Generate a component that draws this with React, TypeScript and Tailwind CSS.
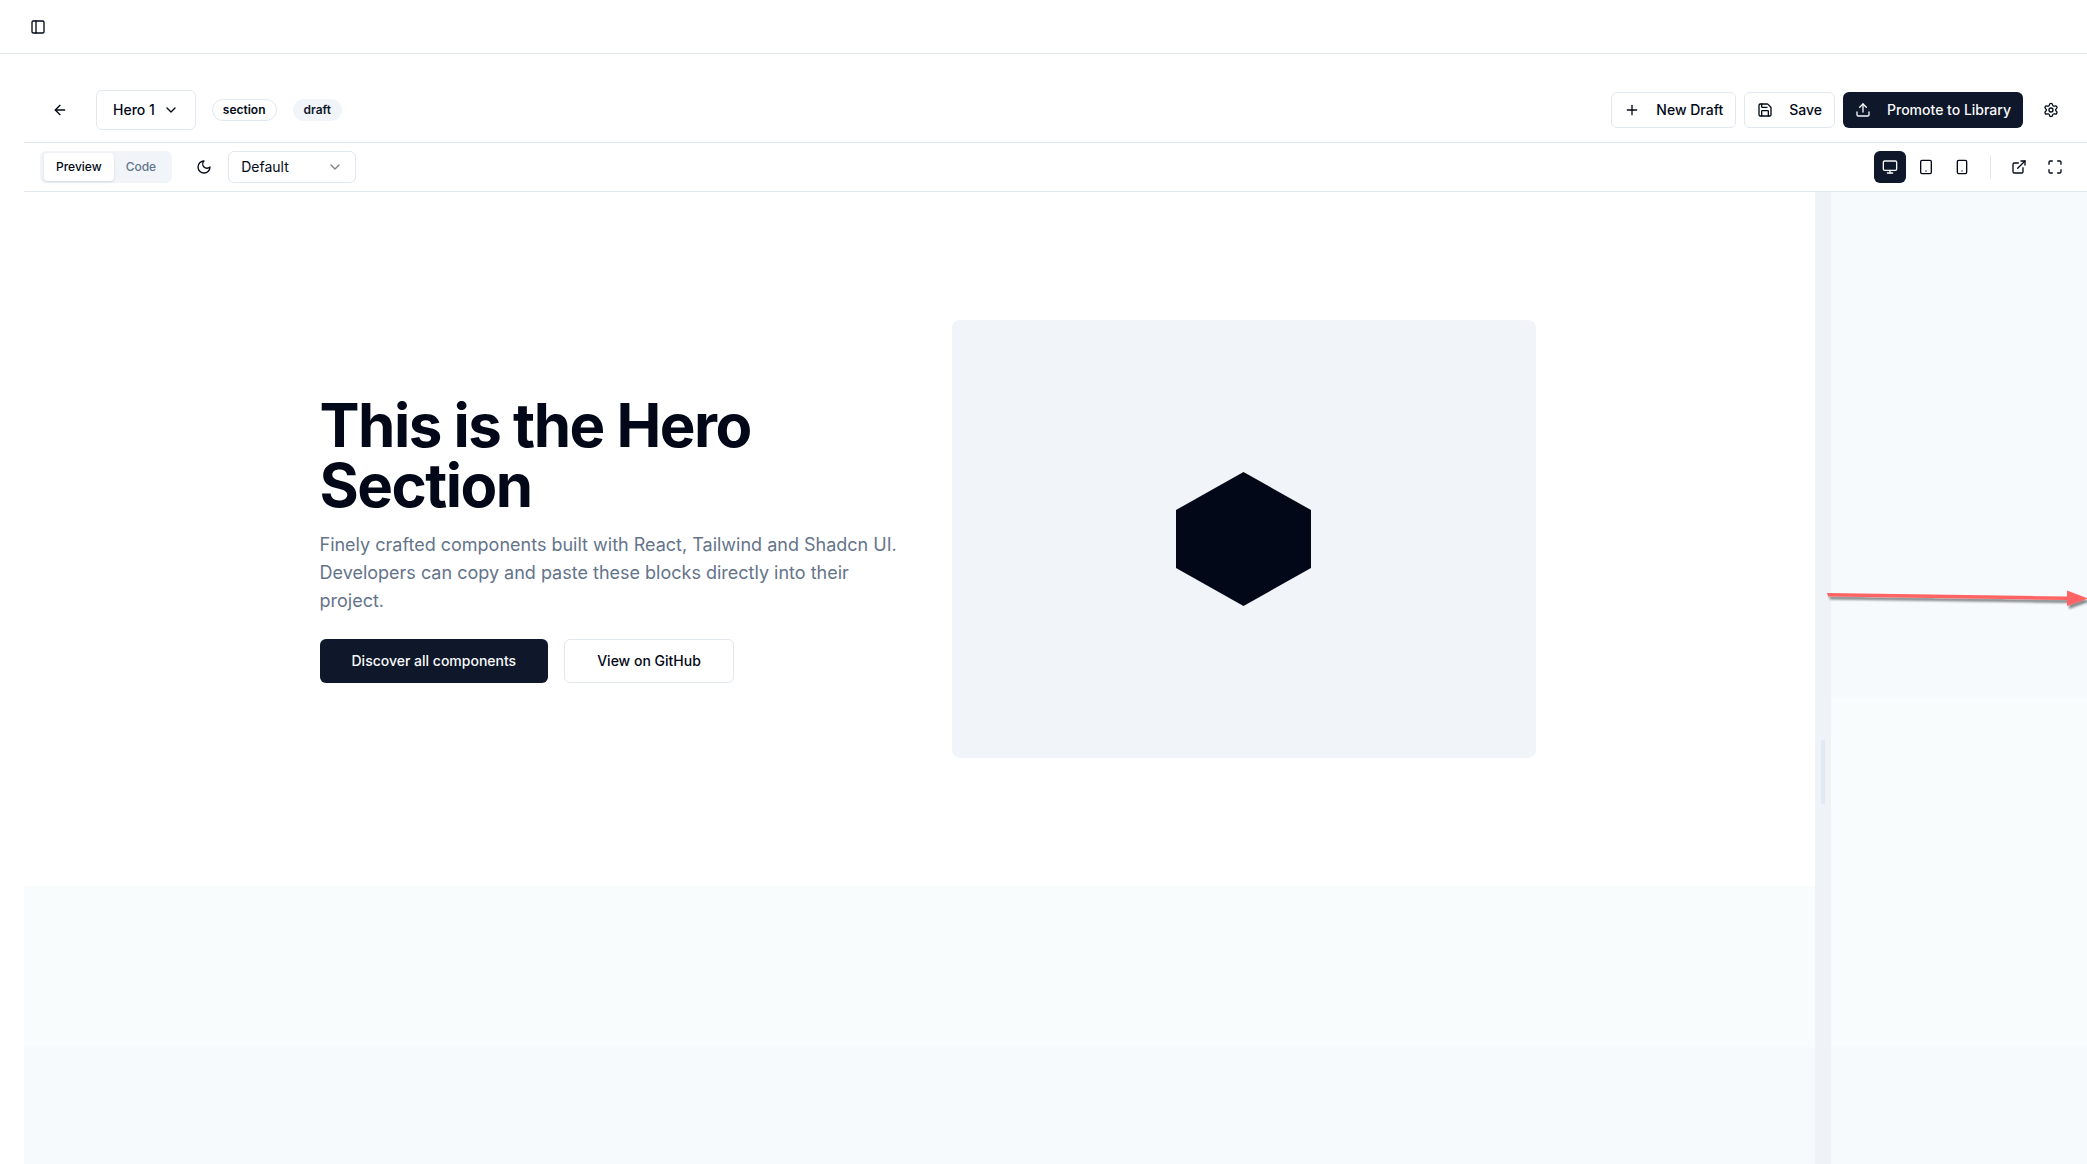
import type { ReactNode } from "react";
import {
  ArrowLeft,
  ChevronDown,
  ExternalLink,
  Maximize,
  Monitor,
  PanelLeft,
  Plus,
  Save,
  Settings,
  Smartphone,
  Tablet,
  Upload,
} from "lucide-react";

function MoonIcon() {
  return (
    <svg
      viewBox="0 0 24 24"
      className="size-4"
      fill="none"
      stroke="currentColor"
      strokeWidth="2"
      strokeLinecap="round"
      strokeLinejoin="round"
      aria-hidden="true"
    >
      <path d="M12 3a6 6 0 0 0 9 9 9 9 0 1 1-9-9Z" />
    </svg>
  );
}

function IconButton({ label, active, children }: { label: string; active?: boolean; children: ReactNode }) {
  return (
    <button
      type="button"
      aria-label={label}
      className={
        active
          ? "flex size-8 items-center justify-center rounded-md bg-[#0f172a] text-[#f8fafc]"
          : "flex size-8 items-center justify-center rounded-md"
      }
    >
      {children}
    </button>
  );
}

function ActionButton({ icon, primary, children }: { icon: ReactNode; primary?: boolean; children: ReactNode }) {
  return (
    <button
      type="button"
      className={
        primary
          ? "flex h-9 items-center gap-4 rounded-md bg-[#0f172a] px-3 text-sm font-medium text-[#f8fafc]"
          : "flex h-9 items-center gap-4 rounded-md border border-[#e2e8f0] bg-white px-3 text-sm font-medium"
      }
    >
      {icon}
      {children}
    </button>
  );
}

function ComponentBar() {
  return (
    <div className="flex items-center justify-between border-b border-[#e2e8f0] px-4 py-3">
      <div className="flex items-center gap-4">
        <button type="button" aria-label="Back" className="flex size-10 items-center justify-center rounded-md">
          <ArrowLeft className="size-4" />
        </button>
        <button
          type="button"
          className="flex h-10 items-center gap-2 rounded-md border border-[#e2e8f0] px-4 text-sm font-medium"
        >
          Hero 1
          <ChevronDown className="size-4" />
        </button>
        <span className="rounded-full border border-[#e2e8f0] px-2.5 py-0.5 text-xs font-semibold">section</span>
        <span className="rounded-full border border-transparent bg-[#f1f5f9] px-2.5 py-0.5 text-xs font-semibold text-[#0f172a]">
          draft
        </span>
      </div>
      <div className="flex items-center gap-2">
        <ActionButton icon={<Plus className="size-4" />}>New Draft</ActionButton>
        <ActionButton icon={<Save className="size-4" />}>Save</ActionButton>
        <ActionButton primary icon={<Upload className="size-4" />}>
          Promote to Library
        </ActionButton>
        <button type="button" aria-label="Settings" className="flex size-10 items-center justify-center rounded-md">
          <Settings className="size-4" />
        </button>
      </div>
    </div>
  );
}

function PreviewToolbar() {
  return (
    <div className="flex items-center justify-between border-b border-[#e2e8f0] px-4 py-2">
      <div className="flex items-center gap-4">
        <div role="tablist" className="flex h-8 items-center rounded-md bg-[#f1f5f9] px-1 text-xs font-medium">
          <button type="button" role="tab" aria-selected="true" className="h-7 rounded-sm bg-white px-3 shadow-sm">
            Preview
          </button>
          <button type="button" role="tab" aria-selected="false" className="h-7 rounded-sm px-3 text-[#64748b]">
            Code
          </button>
        </div>
        <div className="flex items-center gap-2">
          <IconButton label="Dark mode">
            <MoonIcon />
          </IconButton>
          <div className="relative h-8 w-32 rounded-md border border-[#e2e8f0] bg-white">
            <select aria-label="Theme" className="h-full w-full appearance-none bg-transparent px-3 text-sm">
              <option>Default</option>
            </select>
            <ChevronDown className="pointer-events-none absolute inset-y-0 right-3 my-auto size-4 opacity-50" />
          </div>
        </div>
      </div>
      <div className="flex items-center gap-1">
        <IconButton label="Desktop" active>
          <Monitor className="size-4" />
        </IconButton>
        <IconButton label="Tablet">
          <Tablet className="size-4" />
        </IconButton>
        <IconButton label="Mobile">
          <Smartphone className="size-4" />
        </IconButton>
        <div className="mx-2 h-6 w-px bg-[#e2e8f0]" />
        <IconButton label="Open in new tab">
          <ExternalLink className="size-4" />
        </IconButton>
        <IconButton label="Fullscreen">
          <Maximize className="size-4" />
        </IconButton>
      </div>
    </div>
  );
}

function Hero() {
  return (
    <section className="bg-white py-32">
      <div className="mx-auto grid max-w-7xl grid-cols-2 items-center gap-12 px-8">
        <div className="flex flex-col items-start">
          <h1 className="text-6xl leading-none font-bold tracking-tight">This is the Hero Section</h1>
          <p className="mt-4 text-lg leading-7 text-[#64748b]">
            Finely crafted components built with React, Tailwind and Shadcn UI. Developers can copy and paste these
            blocks directly into their project.
          </p>
          <div className="mt-6 flex gap-4">
            <a
              href="#components"
              className="flex h-11 items-center rounded-md bg-[#0f172a] px-8 text-sm font-medium text-[#f8fafc]"
            >
              Discover all components
            </a>
            <a
              href="#github"
              className="flex h-11 items-center rounded-md border border-[#e2e8f0] px-8 text-sm font-medium"
            >
              View on GitHub
            </a>
          </div>
        </div>
        <div className="flex aspect-4/3 items-center justify-center rounded-lg bg-[#f1f5f9]">
          <svg viewBox="0 0 135 134" className="w-[135px]" role="img" aria-label="Hexagon">
            <path d="M67.5 0 135 38V96L67.5 134 0 96V38Z" fill="#020817" />
          </svg>
        </div>
      </div>
    </section>
  );
}

function ResizeHandle() {
  return (
    <div
      role="separator"
      aria-orientation="vertical"
      className="absolute top-0 right-0 flex h-[calc(100vh-4px)] w-4 cursor-ew-resize items-center justify-center bg-[#eff3f8]"
    >
      <div className="h-16 w-1 rounded-full bg-[#e2e8f0]" />
    </div>
  );
}

function DragArrow() {
  return (
    <svg viewBox="0 0 260 28" className="absolute top-[394px] right-0 h-7 w-[260px]" aria-hidden="true">
      <defs>
        <filter id="arrow-shadow" x="-5%" y="-50%" width="110%" height="220%">
          <feDropShadow dx="2" dy="3" stdDeviation="1.2" floodColor="#000" floodOpacity="0.45" />
        </filter>
      </defs>
      <path d="M0 7 240 10.5V4.5L261 12.5 240 20V14L1 10.5Z" fill="#ff6464" filter="url(#arrow-shadow)" />
    </svg>
  );
}

export default function App() {
  return (
    <div className="flex h-screen flex-col overflow-hidden bg-white font-['Inter',sans-serif] text-[#020817]">
      <header className="flex h-[54px] shrink-0 items-center border-b border-[#e2e8f0] px-6">
        <button type="button" aria-label="Toggle sidebar" className="flex size-7 items-center justify-center rounded-md">
          <PanelLeft className="size-4" />
        </button>
      </header>
      <main className="flex min-h-0 grow flex-col pt-6 pl-6">
        <ComponentBar />
        <PreviewToolbar />
        <div className="relative flex min-h-0 grow overflow-hidden bg-[linear-gradient(to_bottom,#f6fafd_52%,#f8fcfd_52%,#f8fcfd_88%,#f6fafd_88%)]">
          <div className="relative min-w-0 grow">
            <Hero />
            <ResizeHandle />
          </div>
          <div className="w-64 shrink-0" />
          <DragArrow />
        </div>
      </main>
    </div>
  );
}
